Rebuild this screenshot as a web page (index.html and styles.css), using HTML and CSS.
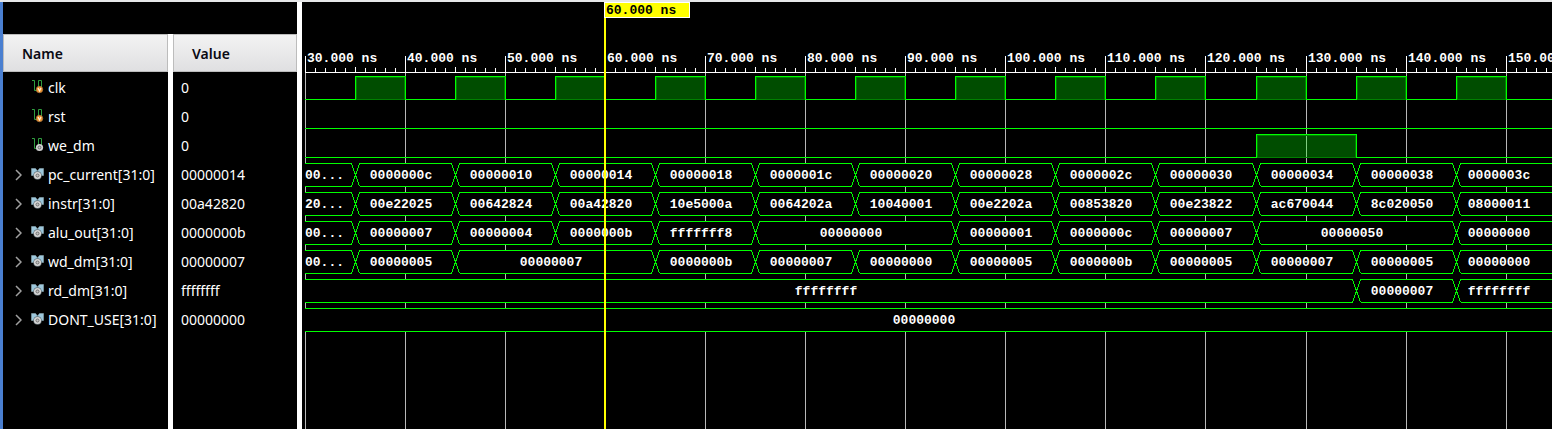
FILE: index.html
```html
<!DOCTYPE html>
<html lang="en">
<head>
<meta charset="utf-8">
<title>Waveform</title>
<link rel="stylesheet" href="styles.css">
</head>
<body>
<svg class="defs" aria-hidden="true">
  <symbol id="input" viewBox="0 0 14 15">
    <path d="M1 .5H3.5V10.5H7.5V.5H10.5V7" fill="none" stroke="#2f9e3f"/>
    <circle cx="8.5" cy="9.5" r="3.2" fill="#f5962a" stroke="#a87440" stroke-width=".8"/>
    <path d="M7 8L8.5 11L10 8" fill="none" stroke="#fff0d8" stroke-width="1.2"/>
  </symbol>
  <symbol id="wire" viewBox="0 0 14 15">
    <path d="M1 .5H3.5V10.5H7.5V.5H10.5V7" fill="none" stroke="#2f9e3f"/>
    <circle cx="8.5" cy="9.5" r="3.6" fill="#cfcfcf"/>
    <circle cx="8.5" cy="9.5" r="1.4" fill="#c4c4c4" stroke="#707070"/>
  </symbol>
  <symbol id="bus" viewBox="0 0 14 15">
    <path d="M.5 1.5H4.5L6.5 4L8.5 1.5H12.5V8.5H.5Z" fill="#9cc7dc" stroke="#8fa9b4" stroke-width=".6"/>
    <circle cx="6.5" cy="8.5" r="4.3" fill="#5d6a70"/>
    <circle cx="6.5" cy="8.5" r="3.6" fill="#d6d6d6"/>
    <circle cx="6.5" cy="8.5" r="1.5" fill="#c4c4c4" stroke="#707070"/>
  </symbol>
</svg>
<main class="viewer">
  <section class="signals">
    <table>
      <thead><tr><th class="name">Name</th><th class="value">Value</th></tr></thead>
      <tbody id="signals"></tbody>
    </table>
  </section>
  <section class="wave"><svg id="wave" role="img" aria-label="Signal waveforms"></svg></section>
</main>
<script src="wave.js"></script>
</body>
</html>
```
FILE: styles.css
```css
* { box-sizing: border-box; }
body { margin: 0; background: #000; color: #fff; font-family: "Noto Sans", "Open Sans", sans-serif; font-size: 14px; }
.defs { display: none; }
.viewer { display: flex; height: 100vh; border-top: 2px solid #e6e7e8; }
.signals { flex: none; display: flex; padding-top: 32px; border-left: 3px solid #4a7fd0; border-right: 5px solid #fff; }
table { height: 100%; border-spacing: 0; }
th, td { padding: 0; text-align: left; }
th { height: 38px; font-weight: 600; color: #0a0a14; background: linear-gradient(#f3f3f3, #dfdfe1); box-shadow: inset 0 0 0 1px #bcbcbc; }
.name { width: 165px; }
.value { width: 129px; border-left: 5px solid #fff; background-clip: padding-box; }
th.name { padding-left: 19px; }
th.value { padding-left: 19px; }
td { height: 29px; padding-top: 2px; white-space: nowrap; }
td.value { padding-left: 8px; }
.filler td { height: auto; }
.signal { display: flex; align-items: center; padding-left: 11px; }
.toggle { display: flex; justify-content: center; width: 9px; margin-right: 8px; padding: 0; border: 0; background: none; }
.toggle svg { width: 7px; height: 12px; }
.leaf { width: 17px; }
.icon { width: 14px; height: 15px; margin-right: 3px; }
.wave { flex: 1; min-width: 0; }
#wave { display: block; width: 100%; height: 100%; shape-rendering: crispEdges; font: bold 13px "Liberation Mono", monospace; fill: #fff; }
.grid { stroke: #b8b8b8; }
.tick { stroke: #fff; }
.mask { fill: #000; }
.trace { fill: none; stroke: #0f0; }
.high { fill: #0f0; fill-opacity: .3; }
.edge { fill: none; stroke: #008000; }
.label { text-anchor: middle; }
.marker { fill: #ff0; }
.flag { fill: #ff0; stroke: #fff; }
.flag-text { fill: #000; }
```
FILE: wave.js
```js
const signals = [
  { name: 'clk', value: '0', icon: 'input', high: [35, 45, 55, 65, 75, 85, 95, 105, 115, 125, 135, 145].map(t => [t, t + 5]) },
  { name: 'rst', value: '0', icon: 'input', high: [] },
  { name: 'we_dm', value: '0', icon: 'wire', high: [[125, 135]] },
  { name: 'pc_current[31:0]', value: '00000014', bus: [[30, '00...'], [35, '0000000c'], [45, '00000010'], [55, '00000014'], [65, '00000018'], [75, '0000001c'], [85, '00000020'], [95, '00000028'], [105, '0000002c'], [115, '00000030'], [125, '00000034'], [135, '00000038'], [145, '0000003c']] },
  { name: 'instr[31:0]', value: '00a42820', bus: [[30, '20...'], [35, '00e22025'], [45, '00642824'], [55, '00a42820'], [65, '10e5000a'], [75, '0064202a'], [85, '10040001'], [95, '00e2202a'], [105, '00853820'], [115, '00e23822'], [125, 'ac670044'], [135, '8c020050'], [145, '08000011']] },
  { name: 'alu_out[31:0]', value: '0000000b', bus: [[30, '00...'], [35, '00000007'], [45, '00000004'], [55, '0000000b'], [65, 'fffffff8'], [75, '00000000'], [95, '00000001'], [105, '0000000c'], [115, '00000007'], [125, '00000050'], [145, '00000000']] },
  { name: 'wd_dm[31:0]', value: '00000007', bus: [[30, '00...'], [35, '00000005'], [45, '00000007'], [65, '0000000b'], [75, '00000007'], [85, '00000000'], [95, '00000005'], [105, '0000000b'], [115, '00000005'], [125, '00000007'], [135, '00000005'], [145, '00000000']] },
  { name: 'rd_dm[31:0]', value: 'ffffffff', bus: [[30, 'ffffffff'], [135, '00000007'], [145, 'ffffffff']] },
  { name: 'DONT_USE[31:0]', value: '00000000', bus: [[30, '00000000']] }
];

document.getElementById('signals').innerHTML = signals.map(s => {
  const toggle = s.bus
    ? `<button class="toggle" aria-label="Expand ${s.name}"><svg viewBox="0 0 7 12"><path d="M1 1L6 6L1 11" fill="none" stroke="#a0a0a0" stroke-width="1.5"/></svg></button>`
    : '<span class="leaf"></span>';
  return `<tr><td class="name"><div class="signal">${toggle}<svg class="icon"><use href="#${s.icon || 'bus'}"/></svg>${s.name}</div></td><td class="value">${s.value}</td></tr>`;
}).join('') + '<tr class="filler"><td class="name"></td><td class="value"></td></tr>';

const svg = document.getElementById('wave');
const START = 30, ROW = 29, TOP = 74, HEIGHT = 23, AXIS = 70;
const x = t => Math.floor(3.06 + (t - START) * 10.01) + 0.5;

function draw() {
  const width = svg.clientWidth, bottom = svg.clientHeight;
  const end = START + Math.ceil(width / 10);
  const out = [];
  const path = (cls, d) => out.push(`<path class="${cls}" d="${d}"/>`);
  const text = (cls, tx, ty, s) => out.push(`<text class="${cls}" x="${tx}" y="${ty}">${s}</text>`);

  for (let t = START; t <= end; t++) {
    const major = t % 10 === 0;
    if (major) path('grid', `M${x(t)} ${AXIS}V${bottom}`);
    path('tick', `M${x(t)} ${AXIS}V${major ? 54 : t % 5 === 0 ? 65 : 66}`);
    if (major) text('time', Math.floor(x(t)) + 2, 60, t + '.000 ns');
  }
  path('tick', `M3 ${AXIS + 0.5}H${width}`);

  signals.forEach((s, i) => {
    const hi = TOP + i * ROW + 0.5, lo = hi + HEIGHT;
    if (s.high) {
      let d = `M3 ${lo}`;
      s.high.forEach(([a, b]) => {
        out.push(`<rect class="high" x="${x(a)}" y="${hi}" width="${x(b) - x(a)}" height="${HEIGHT}"/>`);
        d += `H${x(a)}V${hi}H${x(b)}V${lo}`;
      });
      path('trace', d + `H${width}`);
      s.high.forEach(([a, b]) => path('edge', `M${x(a) + 1} ${lo}V${hi + 1}H${x(b) - 1}V${lo}Z`));
      return;
    }
    out.push(`<rect class="mask" x="3" y="${hi}" width="${width}" height="${HEIGHT}"/>`);
    let upper = `M3 ${hi}`, lower = `M3 ${lo}`;
    s.bus.slice(1).forEach(([t]) => {
      upper += `H${x(t) - 4}L${x(t) + 4} ${lo}M${x(t) + 4} ${hi}`;
      lower += `H${x(t) - 4}L${x(t) + 4} ${hi}M${x(t) + 4} ${lo}`;
    });
    path('trace', upper + `H${width}`);
    path('trace', lower + `H${width}`);
    s.bus.forEach(([t, label], n) => {
      if (label.endsWith('...')) { text('time', 3, hi + 15.5, label); return; }
      const from = x(t), to = n + 1 < s.bus.length ? x(s.bus[n + 1][0]) : width;
      text('label', Math.round((from + to) / 2) - 5, hi + 15.5, label);
    });
  });

  out.push(`<rect class="marker" x="302" y="0" width="2" height="${bottom}"/>`);
  out.push('<rect class="flag" x="302.5" y="0.5" width="85" height="15"/>');
  text('flag-text', 304, 12, '60.000 ns');
  svg.innerHTML = out.join('');
}
draw();
addEventListener('resize', draw);
```
